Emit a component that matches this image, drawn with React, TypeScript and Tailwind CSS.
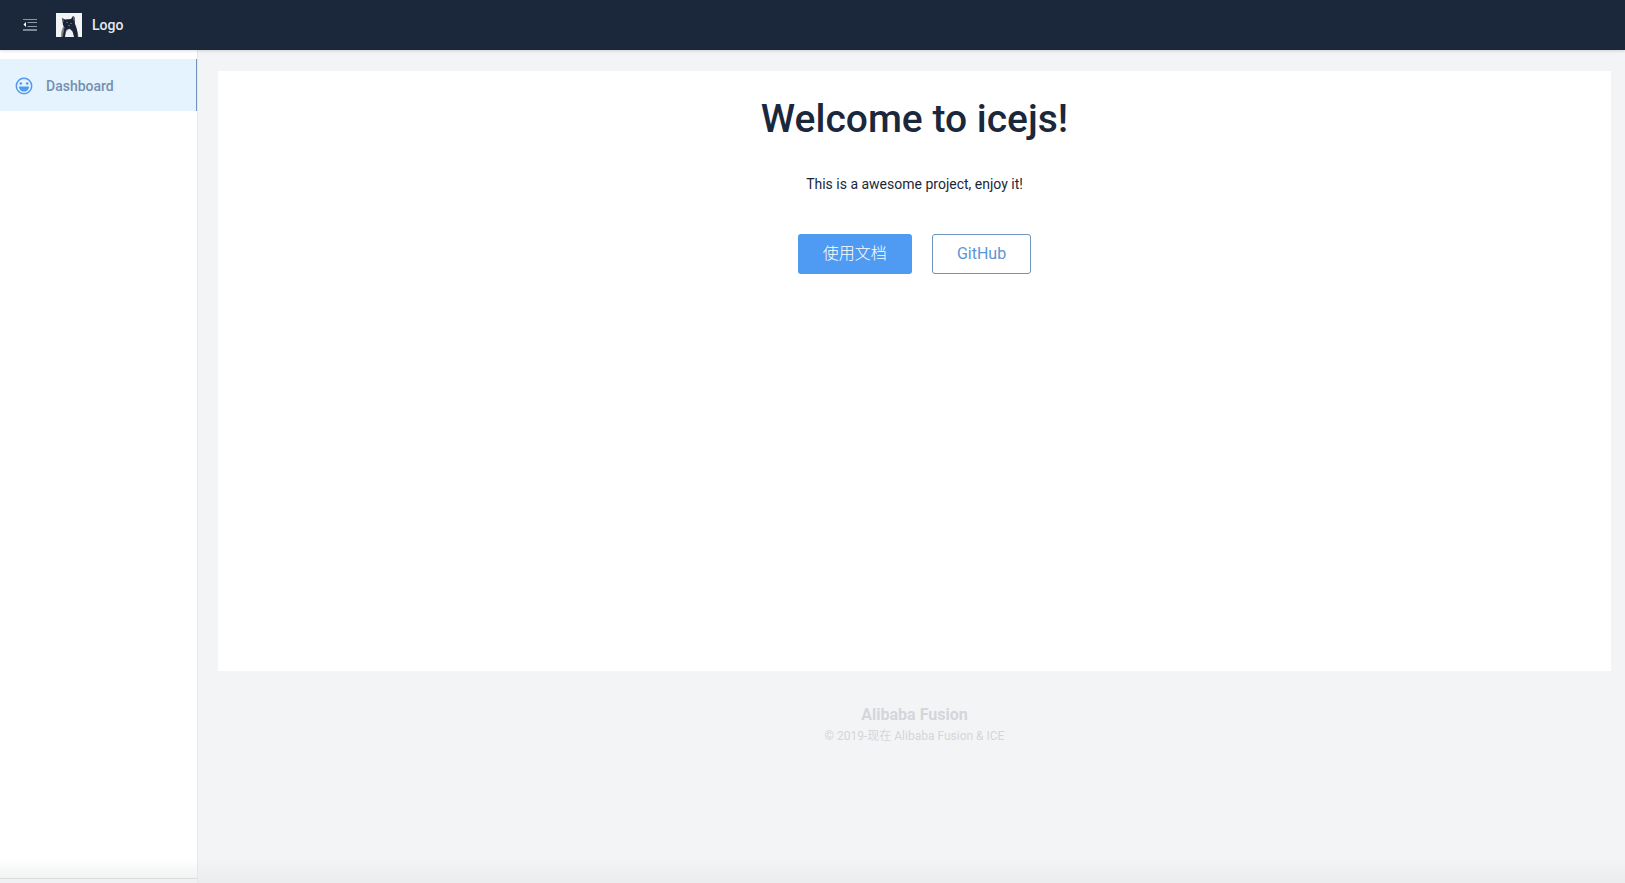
const MenuFoldIcon = () => (
  <svg width="14" height="14" viewBox="0 0 14 14" fill="none" aria-hidden="true">
    <path d="M0 1.5h14" stroke="#8d939b" />
    <path d="M4.500 4.500h9.500" stroke="#8d9bac" />
    <path d="M4.500 8.500h9.500" stroke="#8d9bac" />
    <path d="M0 12h14" stroke="#dde8ef" />
    <path d="M3 4v5L0.5 6.5z" fill="#ffffff" />
  </svg>
);

const CatLogo = () => (
  <svg className="bg-[#f3f4f6]" width="26" height="24" viewBox="0 0 26 24" aria-hidden="true">
    <path d="M5 24c0-5 .5-8 3-11l9-2c3 3 5 7 5.500 13h-3.500l-3-6-3-2-3 3-1.500 5z" fill="#8b9097" />
    <path d="M6.500 24c.5-3 0-6 2-9L7 12 6 5l3 1.500L15 6l2-3 1.500 1 .5 7c2 4 2.500 8 2.800 13H18l-1.500-6-3-2.500L10 17l-1 7z" fill="#1c2537" />
    <path d="M10.500 24l1-5.500 2-2 2.500 2.500L17.500 24z" fill="#eef0f3" />
    <path d="M6.500 5.500l1 3M17.500 3.500l.5 4" stroke="#6f747c" />
    <path d="M10 9.500h2M14 10.500h2M12 12.500h2" stroke="#5d6470" />
    <path d="M8 14l-1.500 9" stroke="#6f747c" />
  </svg>
);

const SmileIcon = () => (
  <svg width="18" height="18" viewBox="0 0 18 18" aria-hidden="true">
    <circle cx="9" cy="9" r="7.700" fill="none" stroke="#5599e8" strokeWidth="1.500" />
    <path d="M4 9.500h10c0 3-2 5-5 5s-5-2-5-5z" fill="#4f9bf3" />
    <circle cx="5.800" cy="6.500" r="1.300" fill="#5599e8" />
    <circle cx="12.200" cy="6.500" r="1.300" fill="#5599e8" />
  </svg>
);

const Header = () => (
  <header className="z-10 flex h-[50px] shrink-0 items-center bg-[#1b273a] pl-[23px] text-white shadow-[0_1px_3px_rgba(0,0,0,0.15)]">
    <button type="button" aria-label="Toggle menu" className="mr-[19px]">
      <MenuFoldIcon />
    </button>
    <a href="#" className="flex items-center gap-2.5 text-sm font-medium text-[#e6eaee]">
      <CatLogo />
      Logo
    </a>
  </header>
);

const Sidebar = () => (
  <aside className="flex w-[198px] shrink-0 flex-col border-r border-[#e6e7eb] bg-white pt-[9px]">
    <nav>
      <a
        href="#"
        aria-current="page"
        className="flex h-[52px] items-center gap-[13px] border-r border-[#6f93bb] bg-[#e4f3fd] pt-0.5 pl-[15px] text-sm font-medium text-[#7590b0]"
      >
        <SmileIcon />
        Dashboard
      </a>
    </nav>
    <div className="mt-auto h-5 border-b border-[#d9dbdd] bg-linear-to-b from-white to-[#f1f2f3]" />
    <div className="h-1 bg-[#f0f1f2]" />
  </aside>
);

const Guide = () => (
  <section className="flex h-[600px] flex-col items-center bg-white pt-5 text-[#1b273a]">
    <h1 className="text-[39px] leading-14 font-medium">Welcome to icejs!</h1>
    <p className="mt-[27px] text-sm leading-5">This is a awesome project, enjoy it!</p>
    <div className="mt-10 flex gap-5">
      <button type="button" className="h-10 rounded-[3px] bg-[#4f9bf3] px-[25px] text-base font-light text-white">
        使用文档
      </button>
      <button type="button" className="h-10 rounded-[3px] border border-[#6f93bb] bg-white px-6 text-base text-[#5b94d6]">
        GitHub
      </button>
    </div>
  </section>
);

const Footer = () => (
  <footer className="pt-8 text-center text-[#d3d6da]">
    <div className="text-base leading-6 font-bold">Alibaba Fusion</div>
    <div className="text-xs leading-[18px]">© 2019-现在 Alibaba Fusion &amp; ICE</div>
  </footer>
);

export default function App() {
  return (
    <div className="flex min-h-screen flex-col bg-[#f3f4f6] font-['Roboto','Noto_Sans_CJK_SC',sans-serif]">
      <Header />
      <div className="flex grow">
        <Sidebar />
        <div className="flex grow flex-col">
          <main className="pt-[21px] pr-3.5 pl-5">
            <Guide />
            <Footer />
          </main>
          <div className="mt-auto h-6 bg-linear-to-b from-[#f3f4f6] to-[#ebecee]" />
        </div>
      </div>
    </div>
  );
}
